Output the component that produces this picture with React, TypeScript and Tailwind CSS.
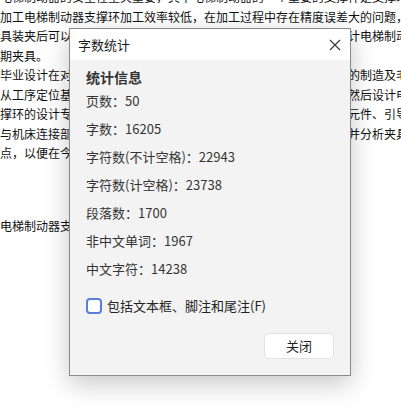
const docLines = [
  '电梯制动器的安全性至关重要，其中电梯制动器的一个重要的支撑件是支撑环，',
  '加工电梯制动器支撑环加工效率较低，在加工过程中存在精度误差大的问题，',
  '具装夹后可以有效地提高加工效率和加工精度，因此本课题需要设计电梯制动',
  '期夹具。',
  '毕业设计在对电梯制动器支撑环进行工艺分析的基础上，完成零件的制造及毛',
  '从工序定位基准出发，对零件的加工工艺路线进行了合理的安排，然后设计电',
  '撑环的设计专用夹具，主要包括夹具的定位元件、夹紧元件、对刀元件、引导',
  '与机床连接部件等的设计，计算出夹具的定位误差和所需夹紧力，并分析夹具',
  '点，以便在今后的生产中加以改进。',
];

const stats = [
  { label: '页数', value: '50' },
  { label: '字数', value: '16205' },
  { label: '字符数(不计空格)', value: '22943' },
  { label: '字符数(计空格)', value: '23738' },
  { label: '段落数', value: '1700' },
  { label: '非中文单词', value: '1967' },
  { label: '中文字符', value: '14238' },
];

export default function App() {
  return (
    <div className="relative w-[401px] h-[420px] overflow-hidden bg-white font-['Noto_Sans_CJK_SC',sans-serif]">
      {/* document behind the dialog */}
      <div className="-mt-[13px] text-[12px] leading-[19.5px] text-[#111]">
        {docLines.map((line, i) => (
          <div key={i} className="whitespace-nowrap overflow-hidden">
            {line}
          </div>
        ))}
        <div className="mt-[53px] whitespace-nowrap overflow-hidden">电梯制动器支撑环零件的工艺分析</div>
      </div>

      {/* word count dialog */}
      <div className="absolute left-[69px] top-[28px] w-[282px] h-[348px] flex flex-col border border-[#8a8a8a] bg-[#f3f3f3] shadow-[0_8px_24px_rgba(0,0,0,0.22)]">
        <div className="h-[31px] shrink-0 flex items-center justify-between bg-white pl-[8px] pr-[9px]">
          <span className="text-[13px] text-[#1a1a1a]">字数统计</span>
          <svg width="12" height="12" viewBox="0 0 12 12" fill="none">
            <path d="M1 1L11 11M11 1L1 11" stroke="#333" strokeWidth="1.1" />
          </svg>
        </div>

        <div className="flex-1 flex flex-col px-4 pb-[16px]">
          <div className="mt-[7px] text-[14px] leading-[20px] font-bold text-[#333]">统计信息</div>
          {stats.map((s) => (
            <div key={s.label} className="text-[13px] leading-[28px] text-[#333]">
              {s.label}：{s.value}
            </div>
          ))}

          <label className="mt-[15px] flex items-center gap-[5px] h-[16px]">
            <span className="w-[16px] h-[16px] rounded-[4px] border-2 border-[#5b7fd8] bg-white" />
            <span className="text-[13px] text-[#222]">包括文本框、脚注和尾注(F)</span>
          </label>

          <div className="mt-auto flex justify-end">
            <button className="w-[70px] h-[26px] rounded-[5px] border border-[#e2e2e2] bg-white text-[13px] text-[#222]">
              关闭
            </button>
          </div>
        </div>
      </div>
    </div>
  );
}
